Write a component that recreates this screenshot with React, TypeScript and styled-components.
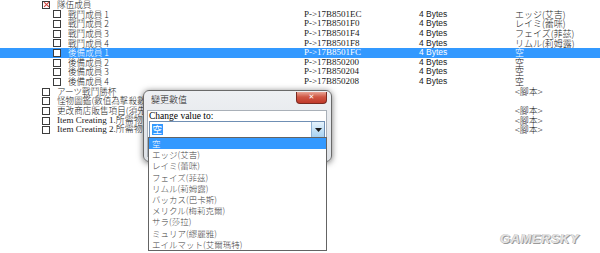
import React from 'react';
import styled, { createGlobalStyle } from 'styled-components';

const GlobalStyle = createGlobalStyle`
  html, body {
    margin: 0;
    padding: 0;
    background: #ffffff;
    overflow: hidden;
  }
`;

type RowData = {
  level: 0 | 1;
  label: string;
  latin?: boolean;
  crossed?: boolean;
  address?: string;
  size?: string;
  value?: string;
  selected?: boolean;
};

// labels that run under the dialog keep only the part the dialog leaves visible
const rows: RowData[] = [
  { level: 0, label: '隊伍成員', crossed: true },
  { level: 1, label: '戰鬥成員 1', address: 'P->17B8501EC', size: '4 Bytes', value: 'エッジ(艾吉)' },
  { level: 1, label: '戰鬥成員 2', address: 'P->17B8501F0', size: '4 Bytes', value: 'レイミ(蕾咪)' },
  { level: 1, label: '戰鬥成員 3', address: 'P->17B8501F4', size: '4 Bytes', value: 'フェイズ(菲茲)' },
  { level: 1, label: '戰鬥成員 4', address: 'P->17B8501F8', size: '4 Bytes', value: 'リムル(莉姆露)' },
  { level: 1, label: '後備成員 1', address: 'P->17B8501FC', size: '4 Bytes', value: '空', selected: true },
  { level: 1, label: '後備成員 2', address: 'P->17B850200', size: '4 Bytes', value: '空' },
  { level: 1, label: '後備成員 3', address: 'P->17B850204', size: '4 Bytes', value: '空' },
  { level: 1, label: '後備成員 4', address: 'P->17B850208', size: '4 Bytes', value: '空' },
  { level: 0, label: 'アーツ戰鬥勝杯', value: '<腳本>' },
  { level: 0, label: '怪物圖鑑(數值為擊殺數' },
  { level: 0, label: '更改商店販售項目(須先', value: '<腳本>' },
  { level: 0, label: 'Item Creating 1.所需物品', latin: true, value: '<腳本>' },
  { level: 0, label: 'Item Creating 2.所需物品', latin: true, value: '<腳本>' },
];

const options = [
  '空',
  'エッジ(艾吉)',
  'レイミ(蕾咪)',
  'フェイズ(菲茲)',
  'リムル(莉姆露)',
  'バッカス(巴卡斯)',
  'メリクル(梅莉克爾)',
  'サラ(莎拉)',
  'ミュリア(繆麗雅)',
  'エイルマット(艾爾瑪特)',
];

const App: React.FC = () => {
  return (
    <Page>
      <GlobalStyle />
      <Tree>
        {rows.map((row, i) => (
          <Row key={i} selected={row.selected}>
            <NameCell level={row.level}>
              <Check>{row.crossed && <CrossMark />}</Check>
              <Label latin={row.latin}>{row.label}</Label>
            </NameCell>
            <Address>{row.address}</Address>
            <Size>{row.size}</Size>
            <Value>{row.value}</Value>
          </Row>
        ))}
      </Tree>

      <Dialog>
        <TitleBar>
          <Title>變更數值</Title>
          <CloseButton>✕</CloseButton>
        </TitleBar>
        <Client>
          <Prompt>Change value to:</Prompt>
          <Combo>
            <ComboText>
              <Picked>空</Picked>
            </ComboText>
            <ComboArrow>
              <svg width="7" height="4" viewBox="0 0 7 4">
                <path d="M0 0 L7 0 L3.5 4 Z" fill="#1b1b1b" />
              </svg>
            </ComboArrow>
          </Combo>
        </Client>
      </Dialog>

      <DropList>
        {options.map((opt, i) => (
          <Option key={opt} active={i === 0}>{opt}</Option>
        ))}
      </DropList>

      <Watermark>GAMERSKY</Watermark>
    </Page>
  );
};

export default App;

const Page = styled.div`
  position: relative;
  width: 600px;
  height: 253px;
  overflow: hidden;
  background: #ffffff;
  color: #111111;
`;

const Tree = styled.div`
  display: flex;
  flex-direction: column;
`;

const Row = styled.div<{ selected?: boolean }>`
  display: grid;
  grid-template-columns: 304px 115px 96px 1fr;
  align-items: center;
  height: 9.65px;
  background: ${p => (p.selected ? '#3399ff' : 'transparent')};
  color: ${p => (p.selected ? '#ffffff' : '#1a1a1a')};
  white-space: nowrap;
`;

const NameCell = styled.div<{ level: 0 | 1 }>`
  display: flex;
  align-items: center;
  gap: 7px;
  padding-left: ${p => (p.level === 1 ? 53 : 42)}px;
`;

const Check = styled.span`
  position: relative;
  flex: none;
  width: 8px;
  height: 8px;
  box-sizing: border-box;
  border: 1px solid #3c3c3c;
  background: #ffffff;
`;

const CrossMark = styled.span`
  position: absolute;
  inset: 0;
  &::before,
  &::after {
    content: '';
    position: absolute;
    left: -0.5px;
    top: 2.5px;
    width: 7px;
    height: 1px;
    background: #d0403a;
    transform: rotate(45deg);
  }
  &::after {
    transform: rotate(-45deg);
  }
`;

const Label = styled.span<{ latin?: boolean }>`
  font-family: ${p =>
    p.latin
      ? '"Liberation Serif", "Noto Sans CJK TC", serif'
      : '"Noto Sans CJK TC", sans-serif'};
  font-size: ${p => (p.latin ? 9 : 8.6)}px;
  font-weight: 300;
  line-height: 9.65px;
`;

const Address = styled.span`
  font-family: "Liberation Serif", serif;
  font-size: 9px;
  line-height: 9.65px;
`;

const Size = styled.span`
  font-family: "Liberation Sans", sans-serif;
  font-size: 8.5px;
  line-height: 9.65px;
`;

const Value = styled.span`
  font-family: "Noto Sans CJK TC", sans-serif;
  font-size: 9px;
  font-weight: 300;
  line-height: 9.65px;
`;

const Dialog = styled.div`
  position: absolute;
  left: 143px;
  top: 90px;
  width: 189px;
  height: 72px;
  box-sizing: border-box;
  border: 1px solid #6a6a6a;
  border-radius: 6px;
  background: linear-gradient(180deg, #eef0f3 0%, #dde1e6 100%);
  box-shadow: 0 1px 6px rgba(0, 0, 0, 0.55);
  display: flex;
  flex-direction: column;
  padding: 0 4px 4px 3px;
`;

const TitleBar = styled.div`
  display: flex;
  align-items: flex-start;
  justify-content: space-between;
  height: 19px;
`;

const Title = styled.span`
  font-family: "Noto Sans CJK TC", sans-serif;
  font-size: 9px;
  font-weight: 300;
  line-height: 11px;
  color: #222222;
  margin: 3px 0 0 4px;
`;

const CloseButton = styled.span`
  width: 31px;
  height: 12px;
  margin-top: 1px;
  border: 1px solid #7a2a20;
  border-top: none;
  border-radius: 0 0 4px 4px;
  box-sizing: border-box;
  background: linear-gradient(180deg, #e9a596 0%, #cf5744 45%, #c0392a 100%);
  color: #ffffff;
  font-family: "DejaVu Sans", sans-serif;
  font-size: 7px;
  font-weight: bold;
  line-height: 11px;
  text-align: center;
`;

const Client = styled.div`
  flex: 1;
  background: #ffffff;
  border: 1px solid #a9b0b8;
  padding: 1px 1px 0 1px;
  display: flex;
  flex-direction: column;
`;

const Prompt = styled.span`
  font-family: "Liberation Serif", serif;
  font-size: 9.5px;
  line-height: 9px;
  color: #000000;
`;

const Combo = styled.div`
  display: flex;
  align-items: stretch;
  height: 17px;
  box-sizing: border-box;
  border: 1px solid #6f8fb4;
  background: #ffffff;
`;

const ComboText = styled.div`
  flex: 1;
  display: flex;
  align-items: center;
  padding-left: 2px;
`;

const Picked = styled.span`
  background: #3399ff;
  color: #ffffff;
  font-family: "Noto Sans CJK TC", sans-serif;
  font-size: 9.5px;
  line-height: 11px;
  padding: 0 0.5px;
`;

const ComboArrow = styled.div`
  width: 12px;
  display: flex;
  align-items: center;
  justify-content: center;
  border-left: 1px solid #8fb2d4;
  background: linear-gradient(180deg, #e6f3fc 0%, #c5e2f7 50%, #a9d2f1 100%);
`;

const DropList = styled.div`
  position: absolute;
  left: 148px;
  top: 137px;
  width: 179px;
  height: 114px;
  box-sizing: border-box;
  border: 1px solid #646464;
  background: #ffffff;
  display: flex;
  flex-direction: column;
`;

const Option = styled.div<{ active?: boolean }>`
  height: 11.2px;
  display: flex;
  align-items: center;
  padding-left: 3px;
  background: ${p => (p.active ? '#3399ff' : 'transparent')};
  color: ${p => (p.active ? '#ffffff' : '#3f3f3f')};
  font-family: "Noto Sans CJK TC", sans-serif;
  font-size: 8.5px;
  font-weight: 300;
  line-height: 11.2px;
  white-space: nowrap;
`;

const Watermark = styled.span`
  position: absolute;
  left: 500px;
  top: 231px;
  font-family: "Liberation Sans", sans-serif;
  font-size: 13px;
  font-weight: bold;
  font-style: italic;
  letter-spacing: 0.5px;
  color: #e4e4e4;
  text-shadow:
    1px 1px 0 #9a9a9a,
    -0.5px -0.5px 0 #bdbdbd;
`;
